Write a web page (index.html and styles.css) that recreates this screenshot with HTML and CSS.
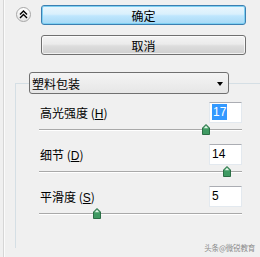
FILE: index.html
```html
<!DOCTYPE html>
<html lang="zh-CN">
<head>
    <meta charset="UTF-8">
    <meta name="viewport" content="width=device-width, initial-scale=1.0">
    <title>塑料包装</title>
    <link rel="stylesheet" href="styles.css">
</head>
<body>
    <div class="panel">
        <div class="actions">
            <button class="toggle" aria-label="收起">
                <svg width="9" height="9" viewBox="0 0 9 9">
                    <path d="M1 4.5 L4.5 1 L8 4.5 M1 8 L4.5 4.5 L8 8" fill="none" stroke="#000" stroke-width="1.4"/>
                </svg>
            </button>
            <div class="btn-col">
                <button class="btn btn-primary">确定</button>
                <button class="btn">取消</button>
            </div>
        </div>

        <fieldset class="group">
            <legend>
                <div class="combo"><span>塑料包装</span><span class="arrow"></span></div>
            </legend>

            <div class="param">
                <div class="param-head">
                    <span class="param-label">高光强度 (<u>H</u>)</span>
                    <div class="num"><span class="sel">17</span></div>
                </div>
                <div class="slider">
                    <div class="track"></div>
                    <div class="thumb" style="left: 82.3%">
                        <svg width="8" height="11" viewBox="0 0 8 11"><path d="M4 0.5 L7.5 4 L7.5 10.5 L0.5 10.5 L0.5 4 Z" fill="#3f9a62" stroke="#2b6e45"/><path d="M4 1.8 L6.3 4.2 L1.7 4.2 Z" fill="#dff5e6"/></svg>
                    </div>
                </div>
            </div>

            <div class="param">
                <div class="param-head">
                    <span class="param-label">细节 (<u>D</u>)</span>
                    <div class="num">14</div>
                </div>
                <div class="slider">
                    <div class="track"></div>
                    <div class="thumb" style="left: 92.6%">
                        <svg width="8" height="11" viewBox="0 0 8 11"><path d="M4 0.5 L7.5 4 L7.5 10.5 L0.5 10.5 L0.5 4 Z" fill="#3f9a62" stroke="#2b6e45"/><path d="M4 1.8 L6.3 4.2 L1.7 4.2 Z" fill="#dff5e6"/></svg>
                    </div>
                </div>
            </div>

            <div class="param">
                <div class="param-head">
                    <span class="param-label">平滑度 (<u>S</u>)</span>
                    <div class="num">5</div>
                </div>
                <div class="slider">
                    <div class="track"></div>
                    <div class="thumb" style="left: 28.6%">
                        <svg width="8" height="11" viewBox="0 0 8 11"><path d="M4 0.5 L7.5 4 L7.5 10.5 L0.5 10.5 L0.5 4 Z" fill="#3f9a62" stroke="#2b6e45"/><path d="M4 1.8 L6.3 4.2 L1.7 4.2 Z" fill="#dff5e6"/></svg>
                    </div>
                </div>
            </div>
        </fieldset>

        <div class="watermark">头条@微锐教育</div>
    </div>
</body>
</html>
```

FILE: styles.css
```css
html, body {
    margin: 0;
    padding: 0;
}
body {
    width: 260px;
    height: 257px;
    overflow: hidden;
    background: #f0f0f0;
    font-family: "Noto Sans CJK SC", "Liberation Sans", sans-serif;
    font-size: 12px;
    color: #000;
}
.panel {
    position: relative;
    height: 257px;
    overflow: hidden;
    margin-left: 3px;
    border-left: 1px solid #d6d6d6;
    box-shadow: inset 1px 0 0 #fbfbfb;
    padding-top: 5px;
    box-sizing: border-box;
}
.actions {
    display: flex;
    align-items: flex-start;
}
.toggle {
    width: 15px;
    height: 15px;
    margin: 2px 0 0 12px;
    padding: 0;
    border: 1px solid #a7a7a7;
    border-radius: 50%;
    background: linear-gradient(#ffffff, #e4e4e4);
    display: flex;
    align-items: center;
    justify-content: center;
}
.btn-col {
    display: flex;
    flex-direction: column;
    gap: 10px;
    margin-left: 10px;
    width: 205px;
}
.btn {
    height: 20px;
    padding: 0;
    border: 1px solid #707070;
    border-radius: 3px;
    background: linear-gradient(#f4f4f4 0%, #ebebeb 45%, #dddddd 55%, #cfcfcf 100%);
    box-shadow: inset 0 0 0 1px rgba(255, 255, 255, 0.7);
    font-family: "Noto Sans CJK SC", sans-serif;
    font-size: 12px;
    line-height: 17px;
    color: #000;
}
.btn-primary {
    border-color: #3c7fb1;
    background: linear-gradient(#eaf6fd 0%, #d9f0fc 45%, #bee6fd 55%, #a7d9f5 100%);
    box-shadow: inset 0 0 0 1px #7fd0f2;
}
.group {
    margin: 17px 0 0 11px;
    padding: 8px 0 20px 0;
    border: none;
    border-top: 1px solid #d5dfe5;
    border-left: 1px solid #d5dfe5;
}
.group legend {
    margin-left: 13px;
    padding: 0;
}
.combo {
    width: 200px;
    height: 22px;
    box-sizing: border-box;
    border: 1px solid #707070;
    border-radius: 3px;
    background: linear-gradient(#f4f4f4, #e6e6e6);
    display: flex;
    align-items: center;
    justify-content: space-between;
    padding: 0 5px 0 2px;
    font-size: 12px;
}
.arrow {
    width: 0;
    height: 0;
    border-left: 3.5px solid transparent;
    border-right: 3.5px solid transparent;
    border-top: 4px solid #000;
    margin-top: 2px;
}
.param {
    width: 203px;
    margin: 0 0 7px 23px;
}
.param-head {
    display: flex;
    justify-content: space-between;
    align-items: center;
    height: 21px;
}
.param-label {
    padding-left: 1px;
    font-size: 12px;
}
.param-label u {
    font-family: "Liberation Sans", sans-serif;
}
.num {
    width: 33px;
    height: 21px;
    box-sizing: border-box;
    border: 1px solid #e3e9ef;
    border-top-color: #abadb3;
    background: #fff;
    padding: 0 0 0 2px;
    font-family: "Liberation Sans", sans-serif;
    font-size: 12px;
    line-height: 19px;
}
.sel {
    background: #3399ff;
    color: #fff;
    padding: 1px 1px;
}
.slider {
    position: relative;
    height: 14px;
}
.track {
    position: absolute;
    left: 0;
    right: 0;
    top: 6px;
    height: 1px;
    background: #a9a9a9;
    border-bottom: 1px solid #ffffff;
}
.thumb {
    position: absolute;
    top: 1px;
    transform: translateX(-50%);
    line-height: 0;
}
.watermark {
    position: absolute;
    right: 5px;
    bottom: 4px;
    font-size: 7.5px;
    color: #8c8c8c;
    letter-spacing: -0.2px;
}
```
